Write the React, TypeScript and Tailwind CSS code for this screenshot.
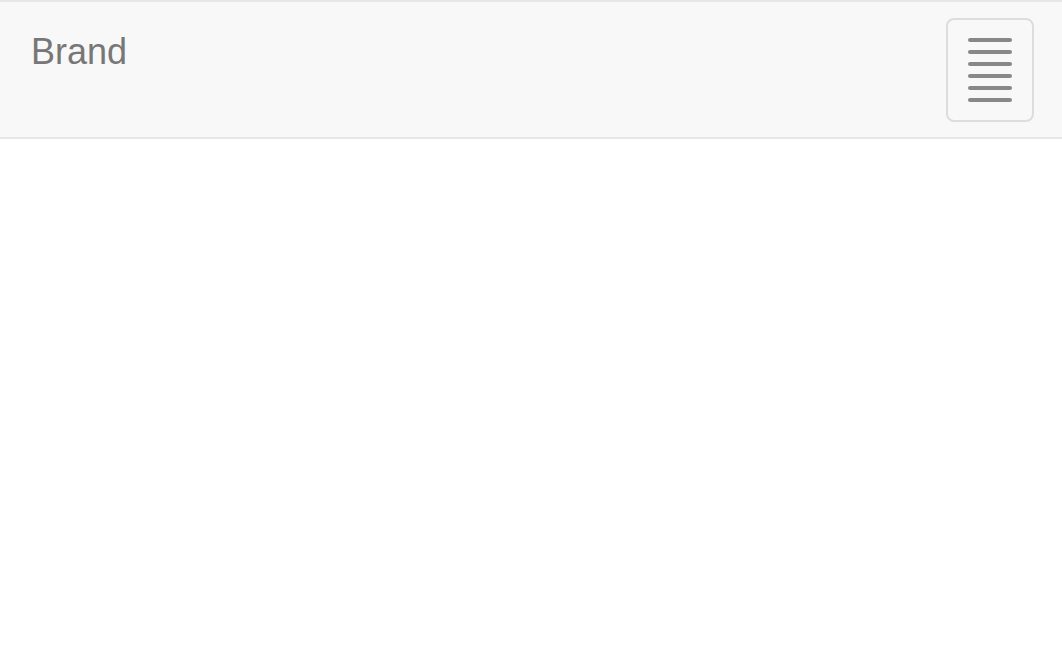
import React from 'react'

function App() {
  const bars = [0, 1, 2, 3, 4, 5]
  return (
    <div className="min-h-screen bg-white" style={{ fontFamily: '"Liberation Sans", Arial, sans-serif' }}>
      <nav className="flex h-[139px] items-start justify-between border-y-2 border-[#e7e7e7] bg-[#f8f8f8]">
        <a href="#" className="ml-[31px] mt-[30px] text-[36px] leading-[40px] text-[#777777]">
          Brand
        </a>
        <button
          type="button"
          className="mr-[28px] mt-[16px] flex h-[104px] w-[88px] flex-col items-center justify-center gap-2 rounded-[8px] border-2 border-[#dddddd]"
        >
          {bars.map((b) => (
            <span key={b} className="block h-[4px] w-[44px] rounded-[2px] bg-[#888888]" />
          ))}
        </button>
      </nav>
    </div>
  )
}

export default App
